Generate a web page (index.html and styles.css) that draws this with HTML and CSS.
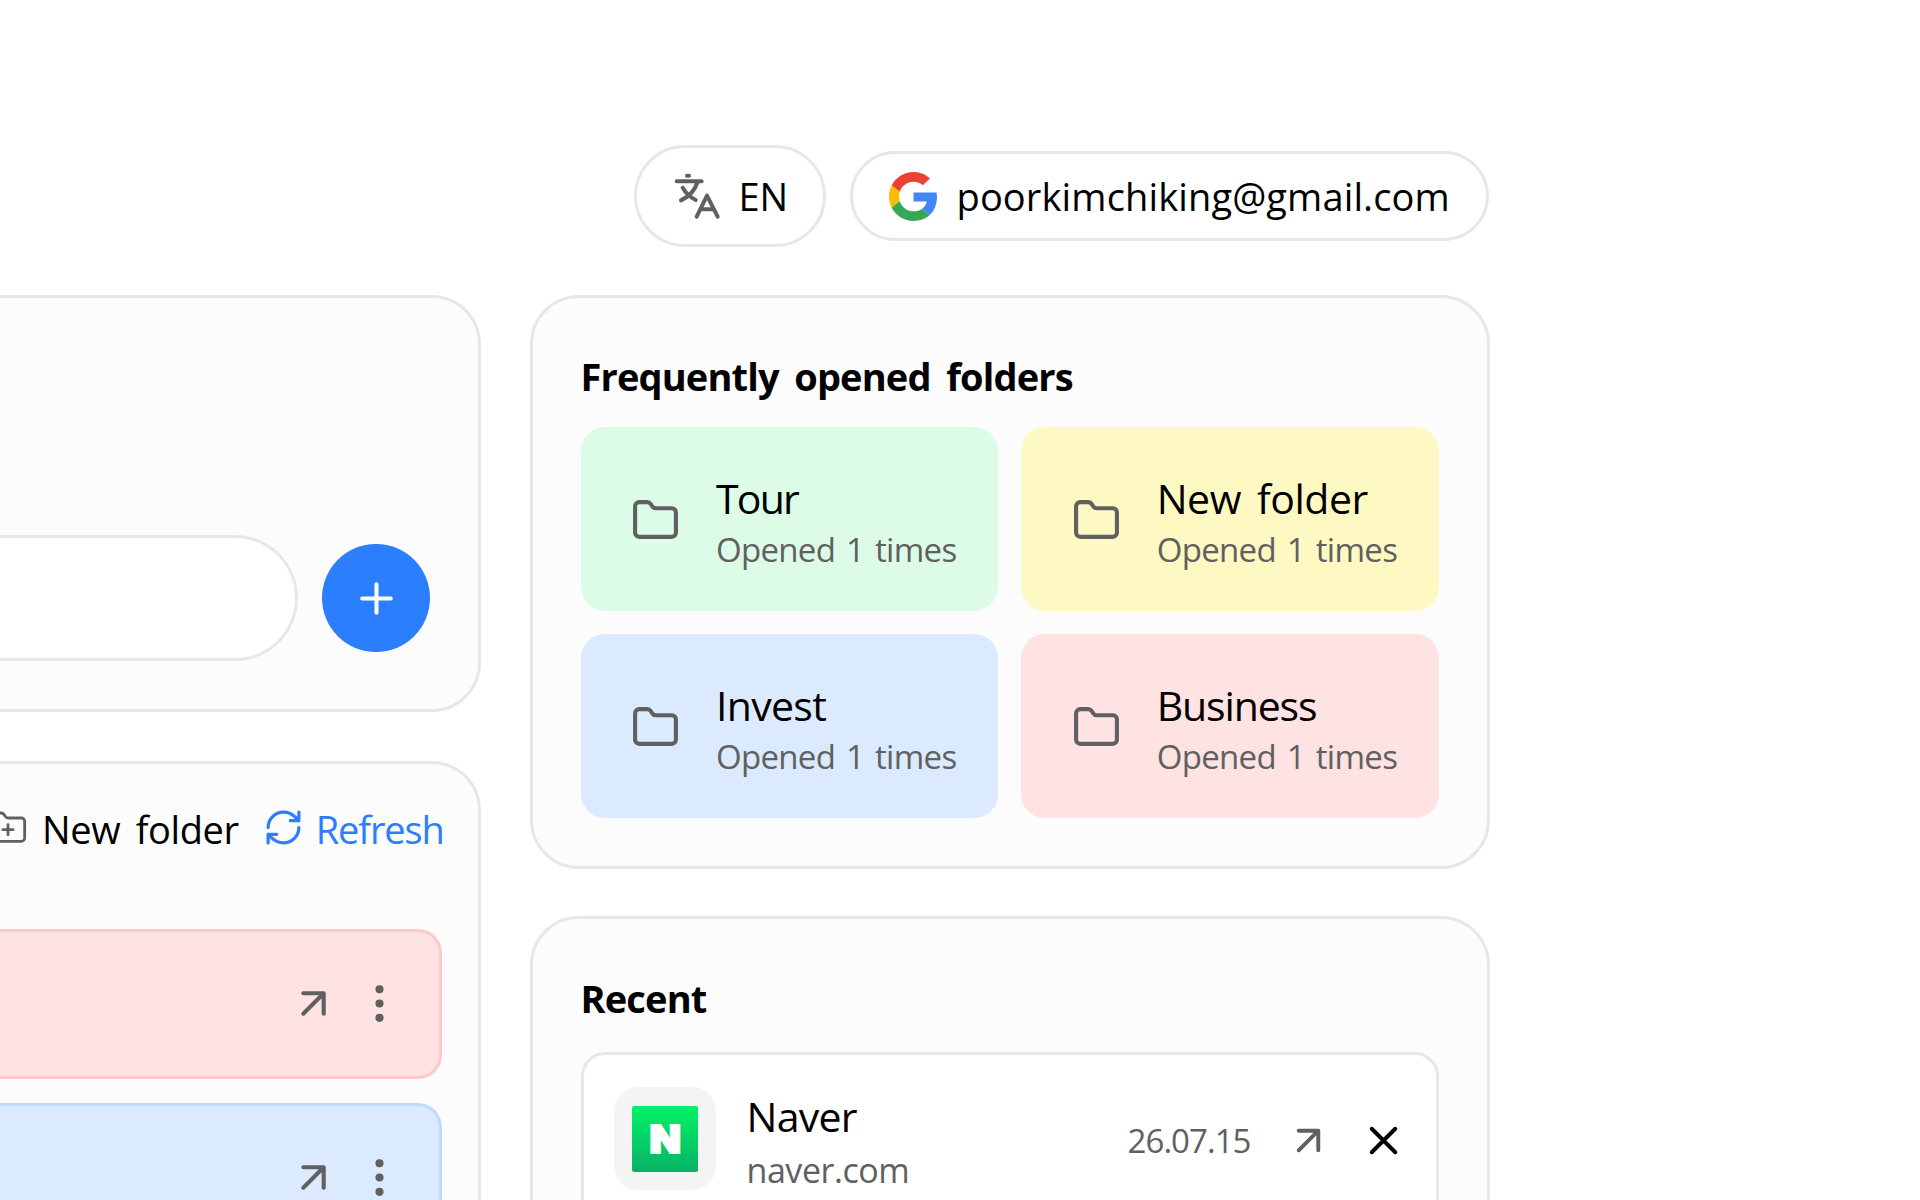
FILE: index.html
```html
<!DOCTYPE html>
<html lang="en">
<head>
<meta charset="UTF-8">
<meta name="viewport" content="width=device-width, initial-scale=1.0">
<title>Bookmarks</title>
<link rel="stylesheet" href="styles.css">
</head>
<body>
<!-- shared icons -->
<svg class="sprite" width="0" height="0">
    <symbol id="folder" viewBox="0 0 24 24">
        <path d="M20 20a2 2 0 0 0 2-2V8a2 2 0 0 0-2-2h-7.9a2 2 0 0 1-1.69-.9L9.6 3.9A2 2 0 0 0 7.93 3H4a2 2 0 0 0-2 2v13a2 2 0 0 0 2 2Z"/>
    </symbol>
    <symbol id="open" viewBox="0 0 24 24">
        <path d="M7 7h10v10M7 17 17 7"/>
    </symbol>
    <symbol id="more" viewBox="0 0 24 24">
        <circle cx="12" cy="12" r="1"/><circle cx="12" cy="5" r="1"/><circle cx="12" cy="19" r="1"/>
    </symbol>
</svg>

<header class="header">
    <button class="pill lang">
        <svg class="lang-icon" viewBox="160 128 144 144">
            <path d="M202 139h6M171 156h75M233 159C226 182 209 201 184 213M189 175C197 190 210 203 228 212M231 262l31-63 32 63M243 240h39"/>
        </svg>
        <span>EN</span>
    </button>
    <button class="pill account">
        <svg class="google" viewBox="0 0 48 48">
            <path fill="#EA4335" d="M24 9.5c3.54 0 6.71 1.22 9.21 3.6l6.85-6.85C35.9 2.38 30.47 0 24 0 14.62 0 6.51 5.38 2.56 13.22l7.98 6.19C12.43 13.72 17.74 9.5 24 9.5z"/>
            <path fill="#4285F4" d="M46.98 24.55c0-1.57-.15-3.09-.38-4.55H24v9.02h12.94c-.58 2.96-2.26 5.48-4.78 7.18l7.73 6c4.51-4.18 7.09-10.36 7.09-17.65z"/>
            <path fill="#FBBC05" d="M10.53 28.59c-.48-1.45-.76-2.99-.76-4.59s.27-3.14.76-4.59l-7.98-6.19C.92 16.46 0 20.12 0 24c0 3.88.92 7.54 2.56 10.78l7.97-6.19z"/>
            <path fill="#34A853" d="M24 48c6.48 0 11.93-2.13 15.89-5.81l-7.73-6c-2.15 1.45-4.92 2.3-8.16 2.3-6.26 0-11.57-4.22-13.47-9.91l-7.98 6.19C6.51 42.62 14.62 48 24 48z"/>
        </svg>
        <span class="email">poorkimchiking@gmail.com</span>
    </button>
</header>

<main class="columns">
    <div class="column left">
        <section class="card add-card">
            <div class="input"></div>
            <button class="add">
                <svg class="icon" viewBox="0 0 24 24"><path d="M5 12h14M12 5v14"/></svg>
            </button>
        </section>
        <section class="card list-card">
            <div class="toolbar">
                <span class="tool">
                    <svg class="icon tool-icon" viewBox="0 0 24 24"><path d="M12 10v6M9 13h6M20 20a2 2 0 0 0 2-2V8a2 2 0 0 0-2-2h-7.9a2 2 0 0 1-1.69-.9L9.6 3.9A2 2 0 0 0 7.93 3H4a2 2 0 0 0-2 2v13a2 2 0 0 0 2 2Z"/></svg>
                    <span class="tool-label">New folder</span>
                </span>
                <span class="tool refresh">
                    <svg class="icon refresh-icon" viewBox="0 0 24 24"><path d="M3 12a9 9 0 0 1 9-9 9.75 9.75 0 0 1 6.74 2.74L21 8M21 3v5h-5M21 12a9 9 0 0 1-9 9 9.75 9.75 0 0 1-6.74-2.74L3 16M8 16H3v5"/></svg>
                    <span class="refresh-label">Refresh</span>
                </span>
            </div>
            <div class="row row-red">
                <svg class="icon"><use href="#open"/></svg>
                <svg class="icon"><use href="#more"/></svg>
            </div>
            <div class="row row-blue">
                <svg class="icon"><use href="#open"/></svg>
                <svg class="icon"><use href="#more"/></svg>
            </div>
        </section>
    </div>

    <div class="column right">
        <section class="card">
            <h2>Frequently opened folders</h2>
            <div class="folders">
                <div class="folder green">
                    <svg class="icon"><use href="#folder"/></svg>
                    <div class="folder-text">
                        <div class="name tour">Tour</div>
                        <div class="count">Opened 1 times</div>
                    </div>
                </div>
                <div class="folder yellow">
                    <svg class="icon"><use href="#folder"/></svg>
                    <div class="folder-text">
                        <div class="name new">New folder</div>
                        <div class="count">Opened 1 times</div>
                    </div>
                </div>
                <div class="folder blue">
                    <svg class="icon"><use href="#folder"/></svg>
                    <div class="folder-text">
                        <div class="name">Invest</div>
                        <div class="count">Opened 1 times</div>
                    </div>
                </div>
                <div class="folder red">
                    <svg class="icon"><use href="#folder"/></svg>
                    <div class="folder-text">
                        <div class="name business">Business</div>
                        <div class="count">Opened 1 times</div>
                    </div>
                </div>
            </div>
        </section>
        <section class="card recent">
            <h2>Recent</h2>
            <div class="item">
                <div class="favicon">
                    <svg viewBox="0 0 66 66">
                        <defs>
                            <linearGradient id="naver" x1="0" y1="0" x2="0" y2="1">
                                <stop offset="0" stop-color="#03f368"/>
                                <stop offset="1" stop-color="#06b265"/>
                            </linearGradient>
                        </defs>
                        <rect width="66" height="66" rx="2" fill="url(#naver)"/>
                        <text class="naver-n" x="17.5" y="47.2" textLength="31.5" lengthAdjust="spacingAndGlyphs">N</text>
                    </svg>
                </div>
                <div class="item-text">
                    <div class="name">Naver</div>
                    <div class="url">naver.com</div>
                </div>
                <span class="date">26.07.15</span>
                <svg class="icon item-icon"><use href="#open"/></svg>
                <svg class="icon item-icon close" viewBox="0 0 24 24"><path d="M18 6 6 18M6 6l12 12"/></svg>
            </div>
        </section>
    </div>
</main>
</body>
</html>
```
FILE: styles.css
```css
* {
    box-sizing: border-box;
}
body {
    margin: 0;
    height: 1200px;
    overflow: hidden;
    background: #fff;
    color: #000;
    font-family: "Open Sans", "Noto Sans", sans-serif;
    font-size: 38px;
}
button {
    font: inherit;
    color: inherit;
    border: 0;
    padding: 0;
}
h2 {
    margin: 0 0 23px;
    font-size: 38px;
    font-weight: 700;
    line-height: 56px;
    letter-spacing: -0.85px;
    word-spacing: 6.5px;
    white-space: nowrap;
}
.sprite {
    display: block;
}
.icon {
    width: 49px;
    height: 49px;
    flex-shrink: 0;
    fill: none;
    stroke: #606060;
    stroke-width: 2;
    stroke-linecap: round;
    stroke-linejoin: round;
}

/* header */
.header {
    display: flex;
    justify-content: flex-end;
    align-items: center;
    gap: 24px;
    width: 1489px;
    height: 102px;
    margin-top: 145px;
}
.pill {
    display: flex;
    align-items: center;
    background: #fff;
    border: 3px solid #e5e7eb;
    border-radius: 52px;
    white-space: nowrap;
}
.lang {
    width: 192px;
    height: 102px;
    padding-left: 35.5px;
    gap: 18px;
}
.lang-icon {
    width: 48px;
    height: 48px;
    fill: none;
    stroke: #606060;
    stroke-width: 12;
    stroke-linecap: round;
    stroke-linejoin: round;
}
.account {
    width: 639px;
    height: 90px;
    padding-left: 36px;
    gap: 18.5px;
}
.google {
    width: 49px;
    height: 49px;
    flex-shrink: 0;
}
.email {
    letter-spacing: 0.13px;
}

/* columns */
.columns {
    display: flex;
    gap: 48.5px;
    margin-top: 48px;
}
.left {
    width: 481px;
}
.right {
    width: 960px;
}
.card {
    height: 574px;
    padding: 50px 48px;
    background: #fcfcfc;
    border: 3px solid #e5e7eb;
    border-radius: 49px;
}
.left .card {
    padding: 0 48px 0 0;
    border-left: 0;
    border-radius: 0 49px 49px 0;
}
.left .add-card {
    display: flex;
    align-items: flex-end;
    gap: 24px;
    height: 417px;
    padding-bottom: 48px;
}
.input {
    flex: 1;
    height: 126px;
    background: #fff;
    border: 3px solid #e5e7eb;
    border-left: 0;
    border-radius: 0 63px 63px 0;
}
.add {
    display: flex;
    align-items: center;
    justify-content: center;
    width: 108px;
    height: 108px;
    margin-bottom: 9px;
    background: #2b7fff;
    border-radius: 50%;
}
.add .icon {
    stroke: #fff;
}
.left .list-card {
    height: 600px;
    margin-top: 48.5px;
    padding: 37px 36px 0 0;
}

/* toolbar */
.toolbar {
    display: flex;
    gap: 24px;
    height: 57px;
    margin-bottom: 71px;
    margin-left: -12px;
    line-height: 57px;
    white-space: nowrap;
}
.tool {
    display: flex;
    align-items: center;
    gap: 14px;
}
.tool-icon {
    width: 40px;
    height: 40px;
    margin-bottom: 3px;
    stroke-width: 1.7;
}
.tool-label {
    letter-spacing: -0.4px;
    word-spacing: 6px;
}
.refresh {
    color: #2b7fff;
    gap: 12px;
}
.refresh-icon {
    width: 41px;
    height: 41px;
    margin-bottom: 3px;
    stroke: #2b7fff;
    stroke-width: 1.9;
}
.refresh-label {
    letter-spacing: -1.1px;
}
.row {
    display: flex;
    align-items: center;
    justify-content: flex-end;
    gap: 17px;
    height: 150px;
    margin-bottom: 24px;
    padding-right: 35.5px;
    border: 3px solid;
    border-left: 0;
    border-radius: 0 24px 24px 0;
}
.row-red {
    background: #ffe2e2;
    border-color: #ffc9c9;
}
.row-blue {
    background: #dbeafe;
    border-color: #bedbff;
}

/* folders */
.folders {
    display: grid;
    grid-template-columns: 1fr 1fr;
    gap: 23.5px;
}
.folder {
    display: flex;
    align-items: center;
    gap: 36px;
    height: 183.5px;
    padding: 3px 0 0 50.5px;
    border-radius: 24px;
    white-space: nowrap;
}
.folder-text {
    padding-top: 4px;
}
.name {
    font-size: 41px;
    line-height: 56px;
    letter-spacing: -0.7px;
}
.name.tour {
    letter-spacing: -1.8px;
}
.name.new {
    letter-spacing: -0.5px;
    word-spacing: 6px;
}
.name.business {
    letter-spacing: -1.15px;
}
.count {
    font-size: 33px;
    line-height: 48px;
    letter-spacing: -0.7px;
    word-spacing: 3px;
    color: #606060;
}
.green {
    background: #dcfce7;
}
.yellow {
    background: #fef9c2;
}
.blue {
    background: #dbeafe;
}
.red {
    background: #ffe2e2;
}

/* recent */
.recent {
    margin-top: 47px;
}
.recent h2 {
    margin: 1px 0 26px;
}
.item {
    display: flex;
    align-items: center;
    height: 174px;
    padding: 32px 29px 30px 30px;
    background: #fff;
    border: 3px solid #e5e7eb;
    border-radius: 24px;
    white-space: nowrap;
}
.favicon {
    display: flex;
    align-items: center;
    justify-content: center;
    align-self: flex-start;
    width: 102px;
    height: 103px;
    margin-right: 31px;
    background: #f4f4f4;
    border-radius: 24px;
}
.favicon svg {
    width: 66px;
    height: 66px;
}
.naver-n {
    font-family: Inter, "Open Sans", sans-serif;
    font-size: 39px;
    font-weight: 900;
    fill: #fff;
    stroke: #fff;
    stroke-width: 2px;
}
.item-text {
    flex: 1;
    padding-top: 4px;
}
.url {
    font-size: 34px;
    line-height: 52px;
    letter-spacing: -0.45px;
    color: #606060;
}
.date {
    margin-right: 34px;
    font-size: 33px;
    letter-spacing: -0.95px;
    color: #606060;
}
.item-icon {
    width: 47px;
    height: 47px;
}
.close {
    margin-left: 28px;
    stroke: #000;
}
```
